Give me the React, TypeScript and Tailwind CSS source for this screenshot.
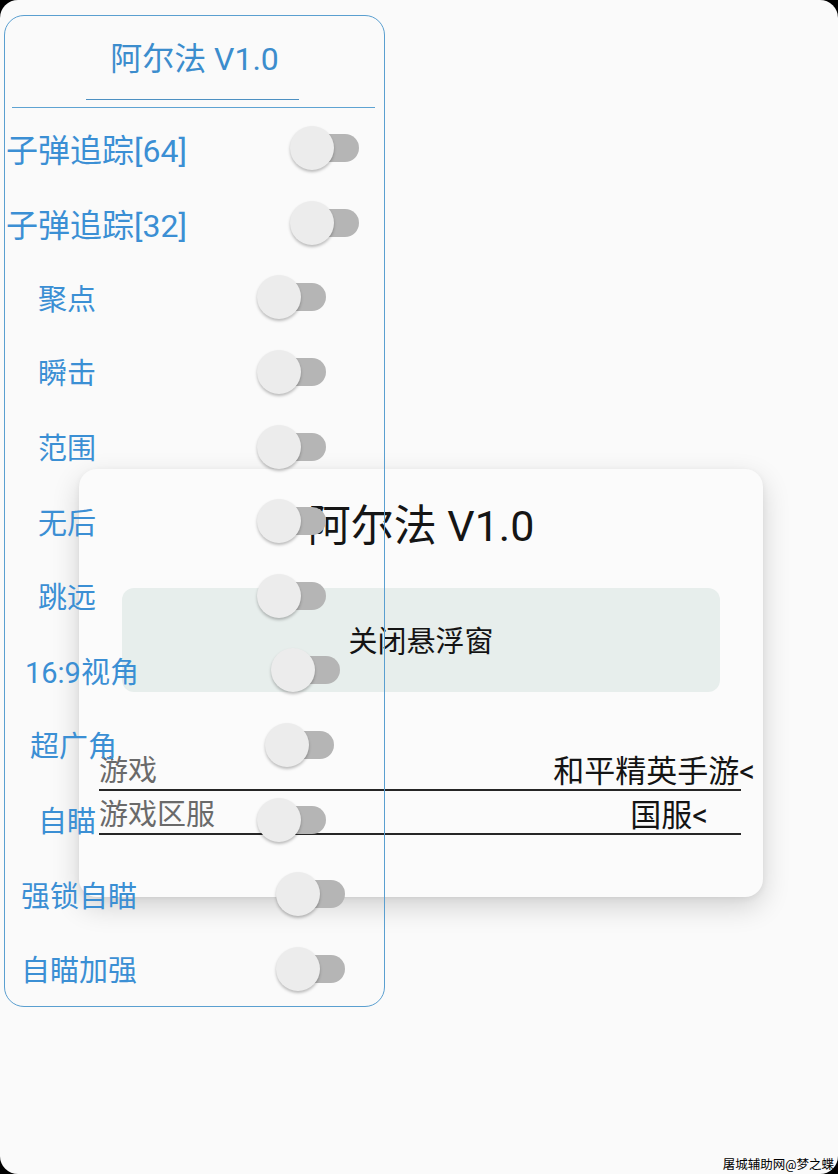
import { useState } from "react";

interface FeatureRow {
  label: string;
  textClass: string; // left padding, width and size of the label box
}

// menu entries of the floating panel, each with its own label box
const features: FeatureRow[] = [
  { label: "子弹追踪[64]", textClass: "pl-[1px] w-[285px] text-[32px]" },
  { label: "子弹追踪[32]", textClass: "pl-[1px] w-[285px] text-[32px]" },
  { label: "聚点", textClass: "pl-[33px] w-[252px] text-[29px]" },
  { label: "瞬击", textClass: "pl-[33px] w-[252px] text-[29px]" },
  { label: "范围", textClass: "pl-[33px] w-[252px] text-[29px]" },
  { label: "无后", textClass: "pl-[33px] w-[252px] text-[29px]" },
  { label: "跳远", textClass: "pl-[33px] w-[252px] text-[29px]" },
  { label: "16:9视角", textClass: "pl-[20px] w-[266px] text-[29px]" },
  { label: "超广角", textClass: "pl-[25px] w-[260px] text-[29px]" },
  { label: "自瞄", textClass: "pl-[33px] w-[252px] text-[29px]" },
  { label: "强锁自瞄", textClass: "pl-[16px] w-[271px] text-[29px]" },
  { label: "自瞄加强", textClass: "pl-[16px] w-[271px] text-[29px]" },
];

function Toggle({ on, onClick }: { on: boolean; onClick: () => void }) {
  return (
    <div onClick={onClick} className="relative h-[44px] w-[69px] shrink-0 cursor-pointer">
      <div
        className={
          on
            ? "absolute right-0 top-1/2 h-[28px] w-[53px] -translate-y-1/2 rounded-full bg-[#9cc6ea]"
            : "absolute right-0 top-1/2 h-[28px] w-[53px] -translate-y-1/2 rounded-full bg-[#b5b5b5]"
        }
      />
      <div
        className={
          on
            ? "absolute left-[25px] top-0 h-[44px] w-[44px] rounded-full bg-[#3b8fd4] shadow-[0_2px_3px_rgba(0,0,0,0.25)]"
            : "absolute left-0 top-0 h-[44px] w-[44px] rounded-full bg-[#ececec] shadow-[0_2px_3px_rgba(0,0,0,0.25)]"
        }
      />
    </div>
  );
}

export default function App() {
  const [enabled, setEnabled] = useState<boolean[]>(features.map(() => false));
  const flip = (i: number) =>
    setEnabled((prev) => prev.map((v, idx) => (idx === i ? !v : v)));

  return (
    <div className="h-[1174px] w-full bg-black font-['Roboto','Noto_Sans_CJK_SC',sans-serif]">
      <div className="relative h-full w-full overflow-hidden rounded-[18px] bg-[#fafafa]">
        {/* settings dialog */}
        <div className="absolute left-[79px] top-[469px] flex h-[428px] w-[684px] flex-col rounded-[18px] bg-[#fbfbfb] shadow-[0_10px_28px_rgba(0,0,0,0.16),0_2px_6px_rgba(0,0,0,0.06)]">
          <div className="pt-[33px] text-center text-[43px] leading-[48px] text-[#151515]">
            阿尔法 V1.0
          </div>
          <button className="mx-[43px] mt-[38px] flex h-[104px] items-center justify-center rounded-[12px] bg-[#e7eeec] pt-[6px] text-[29px] text-[#141414]">
            关闭悬浮窗
          </button>
          <div className="ml-[20px] mr-[22px] mt-[55px] flex h-[44px] items-center justify-between border-b-2 border-[#262626] pt-[6px]">
            <span className="text-[29px] leading-none text-[#6a6a6a]">游戏</span>
            <span className="-mr-[14px] text-[31px] leading-none text-[#141414]">和平精英手游&lt;</span>
          </div>
          <div className="ml-[20px] mr-[22px] flex h-[44px] items-center justify-between border-b-2 border-[#262626] pt-[6px]">
            <span className="text-[29px] leading-none text-[#6a6a6a]">游戏区服</span>
            <span className="mr-[33px] text-[31px] leading-none text-[#141414]">国服&lt;</span>
          </div>
        </div>

        {/* floating menu panel */}
        <div className="absolute left-[4px] top-[15px] z-10 flex h-[992px] w-[381px] flex-col rounded-[20px] border border-[#5a9fd0]">
          <div className="pt-[23px] text-center text-[32px] leading-[40px] text-[#3c8dcd]">
            阿尔法 V1.0
          </div>
          <div className="mx-auto mt-[20px] h-[2px] w-[213px] -translate-x-[2px] bg-[#4d90c2]" />
          <div className="ml-[7px] mr-[9px] mt-[7px] h-[2px] bg-[#5ea3d2]" />
          <div className="mt-[3px] flex flex-col">
            {features.map((f, i) => (
              <div key={f.label} className="flex h-[74.6px] items-center">
                <span className={`${f.textClass} shrink-0 whitespace-nowrap pt-[6px] leading-none text-[#3b8fd4]`}>
                  {f.label}
                </span>
                <Toggle on={enabled[i]} onClick={() => flip(i)} />
              </div>
            ))}
          </div>
        </div>

        <div className="absolute bottom-[3px] right-[4px] text-[12.5px] leading-none text-black">
          屠城辅助网@梦之蝶
        </div>
      </div>
    </div>
  );
}
